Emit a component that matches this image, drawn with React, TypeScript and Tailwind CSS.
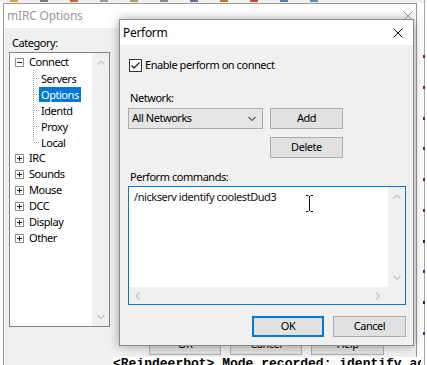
import type { ReactNode } from 'react';

const font = "font-['Noto_Sans','Open_Sans',sans-serif] text-[11px] tracking-[-0.45px]";

function Arrow({ dir, color = '#c4c4c4' }: { dir: 'up' | 'down' | 'left' | 'right'; color?: string }) {
  const points = {
    up: '0.5,4.5 4,1 7.5,4.5',
    down: '0.5,1 4,4.5 7.5,1',
    left: '4.5,0.5 1,4 4.5,7.5',
    right: '1,0.5 4.5,4 1,7.5',
  }[dir];
  const vertical = dir === 'up' || dir === 'down';
  return (
    <svg width={vertical ? 8 : 6} height={vertical ? 6 : 8} viewBox={vertical ? '0 0 8 6' : '0 0 6 8'}>
      <polyline points={points} fill="none" stroke={color} strokeWidth="1.2" />
    </svg>
  );
}

function CloseX({ color }: { color: string }) {
  return (
    <svg width="10" height="10" viewBox="0 0 10 10">
      <path d="M0.5 0.5 L9.5 9.5 M9.5 0.5 L0.5 9.5" stroke={color} strokeWidth="1" />
    </svg>
  );
}

function Button({ children, width, focused }: { children: ReactNode; width: string; focused?: boolean }) {
  return (
    <div
      className={`${width} flex h-[21px] items-center justify-center bg-[#e1e1e1] ${
        focused ? 'border-2 border-[#0078d7]' : 'border border-[#adadad]'
      }`}
    >
      {children}
    </div>
  );
}

function ExpandBox({ open }: { open?: boolean }) {
  return (
    <svg width="9" height="9" viewBox="0 0 9 9">
      <rect x="0.5" y="0.5" width="8" height="8" fill="white" stroke="#919191" />
      <path d="M2 4.5 H7" stroke="#222" />
      {!open && <path d="M4.5 2 V7" stroke="#222" />}
    </svg>
  );
}

const children = ['Servers', 'Options', 'Identd', 'Proxy', 'Local'];
const groups = ['IRC', 'Sounds', 'Mouse', 'DCC', 'Display', 'Other'];

function CategoryTree() {
  return (
    <div className="relative ml-[5px] mt-[1px] flex h-[275px] w-[101px] border border-[#828282] bg-white">
      <div className="relative flex-1 pt-[1px]">
        <svg className="absolute left-0 top-0" width="82" height="150">
          <g stroke="#a0a0a0" strokeDasharray="1 1">
            <line x1="23.5" y1="17" x2="23.5" y2="89" />
            {[25, 41, 57, 73, 89].map((y) => (
              <line key={y} x1="24" y1={y + 0.5} x2="30" y2={y + 0.5} />
            ))}
          </g>
        </svg>
        <div className="flex h-[16px] items-center">
          <div className="ml-[5px] flex">
            <ExpandBox open />
          </div>
          <span className="ml-[5px]">Connect</span>
        </div>
        {children.map((name) => (
          <div key={name} className="flex h-[16px] items-center pl-[29px]">
            <span className={`px-[2px] leading-[15px] ${name === 'Options' ? 'bg-[#0078d7] text-white' : ''}`}>{name}</span>
          </div>
        ))}
        {groups.map((name) => (
          <div key={name} className="flex h-[16px] items-center">
            <div className="ml-[5px] flex">
              <ExpandBox />
            </div>
            <span className="ml-[5px]">{name}</span>
          </div>
        ))}
      </div>
      <div className="flex w-[17px] flex-col items-center justify-between bg-[#f0f0f0] pb-[6px] pt-[7px]">
        <Arrow dir="up" />
        <Arrow dir="down" />
      </div>
    </div>
  );
}

function OptionsWindow() {
  return (
    <div className="absolute left-[3px] top-[3px] flex h-[400px] w-[414px] flex-col border border-[#9a9a9a] bg-[#f0f0f0]">
      <div className="flex h-[24px] items-center justify-between bg-white pl-[3px] pr-[2px]">
        <span className="text-[12px] tracking-[-0.2px] text-[#999]">mIRC Options</span>
        <div className="mr-[1px] flex">
          <CloseX color="#a0a0a0" />
        </div>
      </div>
      <div className="mt-[7px] pl-[8px] leading-[16px]">Category:</div>
      <CategoryTree />
      <div className="ml-[145px] mt-[7px] flex gap-[9px]">
        <Button width="w-[72px]">OK</Button>
        <Button width="w-[72px]">Cancel</Button>
        <Button width="w-[73px]">Help</Button>
      </div>
    </div>
  );
}

function PerformDialog() {
  return (
    <div className="absolute left-[119px] top-[19px] flex h-[327px] w-[295px] flex-col border border-[#8c8c8c] bg-[#f0f0f0] shadow-[0_0_10px_rgba(0,0,0,0.35)]">
      <div className="flex h-[25px] items-center justify-between bg-white pl-[3px] pr-[10px]">
        <span className="text-[12px] tracking-[-0.3px]">Perform</span>
        <CloseX color="#111" />
      </div>
      <div className="flex flex-col pl-[8px]">
        <div className="ml-[1px] mt-[14px] flex h-[13px] items-center">
          <svg width="13" height="13" viewBox="0 0 13 13">
            <rect x="0.5" y="0.5" width="12" height="12" fill="white" stroke="#333" />
            <polyline points="2.5,6.5 5,9 10.5,3.5" fill="none" stroke="#222" strokeWidth="1.3" />
          </svg>
          <span className="ml-[3px]">Enable perform on connect</span>
        </div>
        <div className="ml-[2px] mt-[18px] leading-[16px]">Network:</div>
        <div className="mt-[2px] flex gap-[7px]">
          <div className="flex h-[21px] w-[135px] items-center justify-between border border-[#adadad] bg-[#e5e5e5] pl-[3px] pr-[6px]">
            <span>All Networks</span>
            <Arrow dir="down" color="#606060" />
          </div>
          <Button width="w-[73px]">Add</Button>
        </div>
        <div className="ml-[142px] mt-[8px] flex">
          <Button width="w-[73px]">Delete</Button>
        </div>
        <div className="ml-[2px] mt-[11px] leading-[16px]">Perform commands:</div>
        <div className="relative mt-[1px] flex h-[119px] w-[278px] flex-col border border-[#0078d7] bg-white">
          <div className="flex flex-1">
            <div className="flex-1 pl-[5px] pt-[2px] leading-[16px] text-[#111]">/nickserv identify coolestDud3</div>
            <div className="flex w-[17px] flex-col items-center justify-between bg-[#f0f0f0] pb-[6px] pt-[7px]">
              <Arrow dir="up" />
              <Arrow dir="down" />
            </div>
          </div>
          <div className="flex h-[17px] items-center justify-between bg-[#f0f0f0] pl-[6px] pr-[24px]">
            <Arrow dir="left" />
            <Arrow dir="right" />
          </div>
          <svg className="absolute left-[176px] top-[8px]" width="9" height="17" viewBox="0 0 9 17">
            <path d="M1 0.5 H3.5 M5.5 0.5 H8 M4.5 1 V16 M1 16.5 H3.5 M5.5 16.5 H8" stroke="#111" strokeWidth="1" />
          </svg>
        </div>
        <div className="ml-[124px] mt-[11px] flex gap-[9px]">
          <Button width="w-[72px]" focused>
            OK
          </Button>
          <Button width="w-[73px]">Cancel</Button>
        </div>
      </div>
    </div>
  );
}

export default function App() {
  return (
    <div className={`relative h-[365px] w-[427px] overflow-hidden bg-white text-black ${font}`}>
      <div className="absolute left-0 top-0 flex h-[3px] w-full gap-[22px] bg-[#f0f0f0] pl-[10px]">
        {['#d9a441', '#7a7a7a', '#c86a2a', '#9a9a9a', '#b0a060', '#8a8a8a', '#6a6aa0', '#d07020', '#c05030', '#4a80c0', '#5090c0'].map((c, i) => (
          <div key={i} className="h-[2px] w-[8px]" style={{ backgroundColor: c }} />
        ))}
      </div>
      <div className="absolute right-[2px] top-0 h-full w-px bg-[#a8a8a8]" />
      <div className="absolute right-[2px] top-[55px] flex h-[280px] w-[2px] flex-col justify-between">
        {['#8b1a1a', '#8b1a1a', '#8b1a1a', '#8b1a1a', '#a01010', '#8b1a1a', '#222', '#223388', '#222', '#223388'].map((c, i) => (
          <div key={i} className="h-[3px] w-[2px]" style={{ backgroundColor: c }} />
        ))}
      </div>
      <OptionsWindow />
      <div className="absolute left-[113px] top-[357px] h-[8px] w-[308px] overflow-hidden whitespace-nowrap bg-white font-['Liberation_Mono',monospace] text-[13px] font-bold leading-[14px] tracking-normal">
        &lt;Reindeerbot&gt; Mode recorded: identify accepted
      </div>
      <PerformDialog />
    </div>
  );
}
